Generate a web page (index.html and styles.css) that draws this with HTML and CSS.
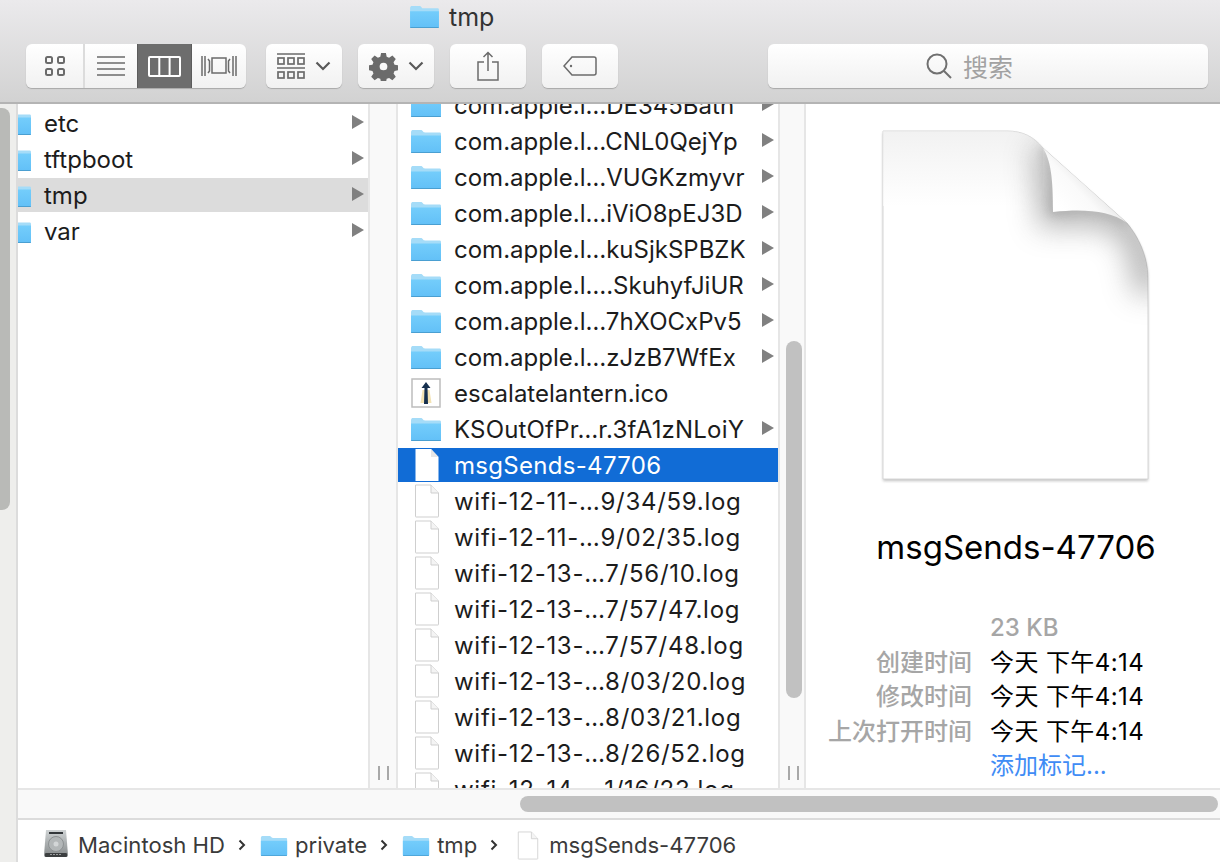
FILE: index.html
```html
<!DOCTYPE html>
<html>
<head>
<meta charset="utf-8">
<title>tmp</title>
<link rel="stylesheet" href="styles.css">
</head>
<body>

<svg class="defs" width="0" height="0">
  <defs>
    <linearGradient id="folderFill" x1="0" y1="0" x2="0" y2="1">
      <stop offset="0" stop-color="#74cdfb"/>
      <stop offset="1" stop-color="#62c0f7"/>
    </linearGradient>
    <symbol id="folder" viewBox="0 0 32 26">
      <path d="M1 4.500C1 2.500 2 2 3 2h7.500c1.500 0 2 .7 2.600 1.600.4.6.9.9 1.900.9H29.500c1 0 1.500.6 1.500 1.500V23.500c0 1-.6 1.500-1.500 1.500h-27C1.500 25 1 24.500 1 23.500z" fill="#a5dcf8"/>
      <path d="M1 7.500h30v16c0 1-.6 1.500-1.500 1.500h-27C1.500 25 1 24.500 1 23.500z" fill="url(#folderFill)"/>
      <path d="M1 24h30v.2c0 .5-.6.8-1.500.8h-27C1.500 25 1 24.700 1 24.200z" fill="#4a9fd1"/>
    </symbol>
    <symbol id="doc" viewBox="0 0 26 34">
      <path d="M1.500 1h15.500l7.500 8v23.500c0 .3-.2.5-.5.5H2c-.3 0-.5-.2-.5-.5z" fill="#fff" stroke="#cfcfcf"/>
      <path d="M17 1v8h7.500" fill="#f4f4f4" stroke="#cfcfcf"/>
    </symbol>
    <symbol id="docWhite" viewBox="0 0 26 34">
      <path d="M1.500 1h15.500l7.500 8v24H1.500z" fill="#fff"/>
      <path d="M17 1v8h7.500" fill="#e6e6e6"/>
    </symbol>
    <symbol id="arrow" viewBox="0 0 12 14">
      <path d="M0 0l12 7-12 7z" fill="#808080"/>
    </symbol>
    <symbol id="chev" viewBox="0 0 8 12">
      <path d="M1.500 1.500L6 6l-4.500 4.500" fill="none" stroke="#333" stroke-width="2"/>
    </symbol>
    <symbol id="drop" viewBox="0 0 16 10">
      <path d="M1.500 1.500L8 8l6.500-6.500" fill="none" stroke="#595959" stroke-width="2.200"/>
    </symbol>
  </defs>
</svg>

<div class="toolbar">
  <div class="title">
    <svg class="title-folder"><use href="#folder"/></svg>
    <span>tmp</span>
  </div>
  <div class="tools">
    <div class="seg">
      <div class="seg-btn seg-icons">
        <svg width="20" height="20" viewBox="0 0 20 20" fill="none" stroke="#6b6b6b" stroke-width="2"><rect x="1" y="1" width="6" height="6" rx="1.500"/><rect x="13" y="1" width="6" height="6" rx="1.500"/><rect x="1" y="13" width="6" height="6" rx="1.500"/><rect x="13" y="13" width="6" height="6" rx="1.500"/></svg>
      </div>
      <div class="seg-btn seg-list">
        <svg width="28" height="20" viewBox="0 0 28 20" fill="none" stroke="#6b6b6b" stroke-width="1.600"><path d="M0 1h28M0 7h28M0 13h28M0 19h28"/></svg>
      </div>
      <div class="seg-btn seg-cols active">
        <svg width="33" height="21" viewBox="0 0 33 21" fill="none" stroke="#fff" stroke-width="2"><rect x="1" y="1" width="31" height="19" rx="1"/><path d="M11.300 1v19M21.600 1v19"/></svg>
      </div>
      <div class="seg-btn seg-flow">
        <svg width="36" height="22" viewBox="0 0 36 22" fill="none" stroke="#6b6b6b" stroke-width="1.500"><rect x="11" y="3" width="14" height="15"/><path d="M1 1v20M4 1v20M7 4l1.500 2v10L7 18M35 1v20M32 1v20M29 4l-1.500 2v10l1.500 2"/></svg>
      </div>
    </div>
    <div class="btn btn-first">
      <svg width="28" height="26" viewBox="0 0 28 26" fill="none" stroke="#6b6b6b" stroke-width="1.700"><path d="M0 1h28M0 15h28"/><rect x="1" y="5" width="6" height="6"/><rect x="11" y="5" width="6" height="6"/><rect x="21" y="5" width="6" height="6"/><rect x="1" y="19" width="6" height="6"/><rect x="11" y="19" width="6" height="6"/><rect x="21" y="19" width="6" height="6"/></svg>
      <svg class="drop"><use href="#drop"/></svg>
    </div>
    <div class="btn">
      <svg width="29" height="29" viewBox="0 0 30 30"><path fill="#6b6b6b" fill-rule="evenodd" d="M12.500 1h5l.8 4 2.500 1 3.400-2.300 3.500 3.500-2.300 3.400 1 2.500 4 .8v5l-4 .8-1 2.500 2.300 3.400-3.500 3.500-3.400-2.300-2.500 1-.8 4h-5l-.8-4-2.500-1-3.400 2.300-3.500-3.500 2.300-3.400-1-2.500-4-.8v-5l4-.8 1-2.500-2.300-3.400 3.500-3.500 3.400 2.300 2.500-1zM15 11a4 4 0 1 0 0 8 4 4 0 0 0 0-8z"/></svg>
      <svg class="drop"><use href="#drop"/></svg>
    </div>
    <div class="btn">
      <svg width="22" height="30" viewBox="0 0 22 30" fill="none" stroke="#6b6b6b" stroke-width="1.500"><path d="M7 11H1v18h20V11h-6M11 20V1.500M6.500 6L11 1.500 15.500 6"/></svg>
    </div>
    <div class="btn">
      <svg width="34" height="20" viewBox="0 0 34 20" fill="none" stroke="#6b6b6b" stroke-width="1.500"><path d="M9 1h22c1.200 0 2 .8 2 2v14c0 1.200-.8 2-2 2H9L1 10z"/><circle cx="8" cy="10" r="1.200" fill="#6b6b6b" stroke="none"/></svg>
    </div>
    <div class="search">
      <svg width="26" height="26" viewBox="0 0 26 26" fill="none" stroke="#707070" stroke-width="2"><circle cx="11" cy="11" r="9.500"/><path d="M18 18l7 7"/></svg>
      <span>搜索</span>
    </div>
  </div>
</div>

<div class="main">
  <div class="leftbar"><div class="leftthumb"></div></div>

  <div class="right">
    <div class="browser">

      <div class="col col-first">
        <div class="row"><svg class="ico-folder"><use href="#folder"/></svg><span class="name">etc</span><svg class="arr"><use href="#arrow"/></svg></div>
        <div class="row"><svg class="ico-folder"><use href="#folder"/></svg><span class="name">tftpboot</span><svg class="arr"><use href="#arrow"/></svg></div>
        <div class="row open"><svg class="ico-folder"><use href="#folder"/></svg><span class="name">tmp</span><svg class="arr"><use href="#arrow"/></svg></div>
        <div class="row"><svg class="ico-folder"><use href="#folder"/></svg><span class="name">var</span><svg class="arr"><use href="#arrow"/></svg></div>
      </div>

      <div class="strip strip-a">
        <div class="handle"></div>
      </div>

      <div class="col col-second">
        <div class="row"><svg class="ico-folder"><use href="#folder"/></svg><span class="name">com.apple.l…DE345Bath</span><svg class="arr"><use href="#arrow"/></svg></div>
        <div class="row"><svg class="ico-folder"><use href="#folder"/></svg><span class="name">com.apple.l…CNL0QejYp</span><svg class="arr"><use href="#arrow"/></svg></div>
        <div class="row"><svg class="ico-folder"><use href="#folder"/></svg><span class="name">com.apple.l…VUGKzmyvr</span><svg class="arr"><use href="#arrow"/></svg></div>
        <div class="row"><svg class="ico-folder"><use href="#folder"/></svg><span class="name">com.apple.l…iViO8pEJ3D</span><svg class="arr"><use href="#arrow"/></svg></div>
        <div class="row"><svg class="ico-folder"><use href="#folder"/></svg><span class="name">com.apple.l…kuSjkSPBZK</span><svg class="arr"><use href="#arrow"/></svg></div>
        <div class="row"><svg class="ico-folder"><use href="#folder"/></svg><span class="name">com.apple.l….SkuhyfJiUR</span><svg class="arr"><use href="#arrow"/></svg></div>
        <div class="row"><svg class="ico-folder"><use href="#folder"/></svg><span class="name">com.apple.l…7hXOCxPv5</span><svg class="arr"><use href="#arrow"/></svg></div>
        <div class="row"><svg class="ico-folder"><use href="#folder"/></svg><span class="name">com.apple.l…zJzB7WfEx</span><svg class="arr"><use href="#arrow"/></svg></div>
        <div class="row">
          <svg class="ico-app" viewBox="0 0 30 30">
            <rect x="1" y="1" width="28" height="28" fill="#fff" stroke="#bdbdbd" stroke-width="1.500"/>
            <path d="M11.500 12h7l2 13h-11z" fill="#f3e3b4"/>
            <path d="M15 4l4.500 6H16.500l.5 16h-4l.5-16H10.500z" fill="#16304f"/>
          </svg>
          <span class="name">escalatelantern.ico</span>
        </div>
        <div class="row"><svg class="ico-folder"><use href="#folder"/></svg><span class="name name-ks">KSOutOfPr…r.3fA1zNLoiY</span><svg class="arr"><use href="#arrow"/></svg></div>
        <div class="row selected"><svg class="ico-doc"><use href="#docWhite"/></svg><span class="name name-sel">msgSends-47706</span></div>
        <div class="row"><svg class="ico-doc"><use href="#doc"/></svg><span class="name name-log">wifi-12-11-…9/34/59.log</span></div>
        <div class="row"><svg class="ico-doc"><use href="#doc"/></svg><span class="name name-log">wifi-12-11-…9/02/35.log</span></div>
        <div class="row"><svg class="ico-doc"><use href="#doc"/></svg><span class="name name-log">wifi-12-13-…7/56/10.log</span></div>
        <div class="row"><svg class="ico-doc"><use href="#doc"/></svg><span class="name name-log">wifi-12-13-…7/57/47.log</span></div>
        <div class="row"><svg class="ico-doc"><use href="#doc"/></svg><span class="name name-log">wifi-12-13-…7/57/48.log</span></div>
        <div class="row"><svg class="ico-doc"><use href="#doc"/></svg><span class="name name-log">wifi-12-13-…8/03/20.log</span></div>
        <div class="row"><svg class="ico-doc"><use href="#doc"/></svg><span class="name name-log">wifi-12-13-…8/03/21.log</span></div>
        <div class="row"><svg class="ico-doc"><use href="#doc"/></svg><span class="name name-log">wifi-12-13-…8/26/52.log</span></div>
        <div class="row"><svg class="ico-doc"><use href="#doc"/></svg><span class="name name-log">wifi-12-14-…1/16/23.log</span></div>
      </div>

      <div class="strip strip-b">
        <div class="vthumb"></div>
        <div class="handle"></div>
      </div>

      <div class="preview">
        <svg class="bigdoc" viewBox="0 0 285 370">
          <defs>
            <linearGradient id="topFade" x1="0" y1="0" x2="0" y2="1">
              <stop offset="0" stop-color="#ececec"/>
              <stop offset="1" stop-color="#fff"/>
            </linearGradient>
            <linearGradient id="flap" gradientUnits="userSpaceOnUse" x1="185" y1="85" x2="222" y2="50">
              <stop offset="0" stop-color="#fff"/>
              <stop offset=".5" stop-color="#fafafa"/>
              <stop offset="1" stop-color="#dedede"/>
            </linearGradient>
            <filter id="soft" x="-10%" y="-10%" width="120%" height="120%">
              <feGaussianBlur stdDeviation="1.500"/>
            </filter>
            <filter id="curlBlur" x="-40%" y="-40%" width="180%" height="180%">
              <feGaussianBlur stdDeviation="15"/>
            </filter>
            <filter id="curlNear" x="-40%" y="-40%" width="180%" height="180%">
              <feGaussianBlur stdDeviation="5"/>
            </filter>
            <clipPath id="sheet">
              <path d="M10 10h124c16 0 27 6 36 17l84 75c11 13 21 33 21 54v202H10z"/>
            </clipPath>
          </defs>
          <path d="M10 12h124c16 0 27 6 36 17l84 75c11 13 21 33 21 54v202H10z" fill="#8f8f8f" filter="url(#soft)" opacity=".55"/>
          <path d="M10 10h124c16 0 27 6 36 17l84 75c11 13 21 33 21 54v202H10z" fill="#fff" stroke="#d6d6d6"/>
          <g clip-path="url(#sheet)">
            <path d="M10 10H170V85H10z" fill="url(#topFade)" opacity=".7"/>
            <path d="M170 27c8 13 10 30 10 64 30-3 56-2 74 11 14 15 21 35 21 70" fill="none" stroke="#8a8a8a" stroke-width="28" opacity=".7" filter="url(#curlBlur)"/>
            <path d="M170 27c8 13 10 30 10 64 30-3 56-2 74 11" fill="none" stroke="#8a8a8a" stroke-width="5" opacity=".5" filter="url(#curlNear)"/>
          </g>
          <path d="M170 27c8 13 10 30 10 64 30-3 56-2 74 11z" fill="url(#flap)"/>
        </svg>
        <div class="docname">msgSends-47706</div>
        <div class="meta">
          <span class="label"></span><span class="size">23 KB</span>
          <span class="label">创建时间</span><span class="val">今天 下午4:14</span>
          <span class="label">修改时间</span><span class="val">今天 下午4:14</span>
          <span class="label">上次打开时间</span><span class="val">今天 下午4:14</span>
          <span class="label"></span><span class="tag-link">添加标记...</span>
        </div>
      </div>

    </div>

    <div class="hscroll"><div class="hthumb"></div></div>

    <div class="pathbar">
      <svg class="disk" viewBox="0 0 24 27">
        <defs>
          <linearGradient id="diskBody" x1="0" y1="0" x2="0" y2="1">
            <stop offset="0" stop-color="#cfd3d4"/>
            <stop offset="1" stop-color="#85898a"/>
          </linearGradient>
        </defs>
        <path d="M2 0h20l2 25c0 1-.6 2-2 2H2c-1.400 0-2-1-2-2z" fill="url(#diskBody)"/>
        <rect x="5" y="2" width="14" height="2" fill="#33373a"/>
        <circle cx="12" cy="14" r="7.500" fill="#b3b7b8" stroke="#8d9192"/>
        <circle cx="12" cy="14" r="2.500" fill="#d3d6d7"/>
        <rect x="1" y="23" width="22" height="4" rx="1" fill="#3c3f40"/>
        <path d="M6 24.500h12" stroke="#9a9c9d" stroke-width="1" stroke-dasharray="2 1"/>
      </svg>
      <span class="crumb crumb-disk">Macintosh HD</span>
      <svg class="sep"><use href="#chev"/></svg>
      <svg class="crumb-folder"><use href="#folder"/></svg>
      <span class="crumb">private</span>
      <svg class="sep"><use href="#chev"/></svg>
      <svg class="crumb-folder"><use href="#folder"/></svg>
      <span class="crumb">tmp</span>
      <svg class="sep"><use href="#chev"/></svg>
      <svg class="crumb-doc"><use href="#doc"/></svg>
      <span class="crumb">msgSends-47706</span>
    </div>
  </div>
</div>

</body>
</html>
```

FILE: styles.css
```css
html, body {height:100%; margin:0;}
body {width:1220px; height:862px; overflow:hidden; display:flex; flex-direction:column; background:#fff; font-family:Inter, "Noto Sans CJK SC", sans-serif; color:#1c1c1c;}
.defs {display:block; height:0;}
svg {display:block; flex:none;}

/* toolbar */
.toolbar {height:102px; flex:none; background:linear-gradient(#ebeaec, #d2d2d2); border-bottom:2px solid #b4b4b4;}
.title {height:44px; padding-left:409px; display:flex; align-items:center; gap:9px; font-size:25px; color:#333;}
.title-folder {width:31px; height:25px; margin-top:-11px;}
.title span {margin-top:-11px;}
.tools {display:flex; align-items:stretch; height:44px; gap:16px; padding-left:26px;}
.seg, .btn, .search {background:linear-gradient(#fff, #f1f1f1); border-radius:6px; box-shadow:0 1px 1px #a8a8a8;}
.seg {width:220px; display:flex; overflow:hidden;}
.seg-btn {display:flex; align-items:center; justify-content:center;}
.seg-icons {width:59px; border-right:2px solid #dcdcdc; box-sizing:border-box;}
.seg-list {width:52px;}
.seg-cols {width:55px;}
.seg-flow {width:54px;}
.seg-btn.active {background:#6d6d6d; box-shadow:inset 1px 0 #5c5c5c, inset -1px 0 #5c5c5c;}
.btn {width:76px; display:flex; align-items:center; justify-content:center; gap:10px;}
.btn-first {margin-left:4px;}
.drop {width:16px; height:10px;}
.search {width:440px; margin-left:134px; box-sizing:border-box; padding-right:37px; display:flex; align-items:center; justify-content:center; gap:11px; font-size:25px; color:#a2a2a2;}

/* main */
.main {height:758px; flex:none; display:flex;}
.leftbar {width:18px; flex:none; background:#eeeeec; border-right:2px solid #dcdcdc; box-sizing:border-box; padding-top:4px;}
.leftthumb {width:10px; height:402px; background:#b9bab7; border-radius:0 8px 8px 0;}
.right {flex:1; min-width:0; display:flex; flex-direction:column;}
.browser {height:684px; flex:none; display:flex; overflow:hidden;}

.col {flex:none; overflow:hidden; display:flex; flex-direction:column; gap:2px;}
.col-first {width:350px; padding-top:2px;}
.col-second {width:380px; margin-top:-16px;}
.row {height:34px; flex:none; display:flex; align-items:center; font-size:24px;}
.name {white-space:nowrap;}
.col-first .name {margin-left:12px;}
.col-first .ico-folder {margin-left:-18px;}
.col-first .arr, .col-second .arr {margin:-2px 4px 0 auto;}
.col-second .row {padding-left:12px;}
.col-second .name {margin-left:12px;}
.name-log {letter-spacing:.72px;}
.name-ks {letter-spacing:.18px;}
.name-sel {letter-spacing:.3px;}
.ico-folder {width:32px; height:26px;}
.ico-doc {width:26px; height:34px; margin:0 2px 0 4px;}
.ico-app {width:30px; height:30px; margin:0 1px;}
.arr {width:12px; height:14px;}
.row.open {background:#dcdcdc;}
.row.selected {background:#116cd6; color:#fff;}

.strip {flex:none; display:flex; flex-direction:column; background:#f9f9f9; border-left:2px solid #e6e6e6; border-right:2px solid #e6e6e6; box-sizing:border-box;}
.strip-a {width:30px;}
.strip-b {width:28px;}
.handle {width:7px; height:14px; margin:auto auto 8px 8px; border-left:2px solid #a8a8a8; border-right:2px solid #a8a8a8;}
.vthumb {width:16px; height:357px; margin:237px 0 0 6px; border-radius:8px; background:#c1c1c1;}

.preview {flex:1; min-width:0; display:flex; flex-direction:column;}
.bigdoc {width:285px; height:370px; margin:17px 0 0 67px;}
.docname {font-size:33px; color:#000; text-align:center; margin-top:34px; line-height:44px; width:420px;}
.meta {display:grid; grid-template-columns:166px auto; column-gap:18px; grid-auto-rows:34.500px; margin-top:42px; font-size:24px; line-height:34px;}
.label {color:#a6a6a6; text-align:right; white-space:nowrap; font-weight:500;}
.size {color:#a6a6a6; font-weight:500;}
.val {color:#000; letter-spacing:.4px;}
.tag-link {color:#3f8cf5;}

/* bottom bars */
.hscroll {height:32px; flex:none; box-sizing:border-box; background:#f9f9f9; border-top:2px solid #e6e6e6; border-bottom:2px solid #dcdcdc; padding:6px 2px 6px 502px;}
.hthumb {height:16px; border-radius:8px; background:#c1c1c1;}
.pathbar {flex:1; display:flex; align-items:center; padding:8px 0 0 26px; font-size:22.100px; color:#3a3a3a; background:#fff;}
.disk {width:24px; height:27px; margin-top:-3px;}
.crumb-disk {margin-left:10px;}
.sep {width:8px; height:12px; margin:0 14px 0 13px;}
.crumb-folder {width:28px; height:23px; margin-right:7px;}
.crumb-doc {width:22px; height:29px; margin:0 10px 0 5px;}
```
